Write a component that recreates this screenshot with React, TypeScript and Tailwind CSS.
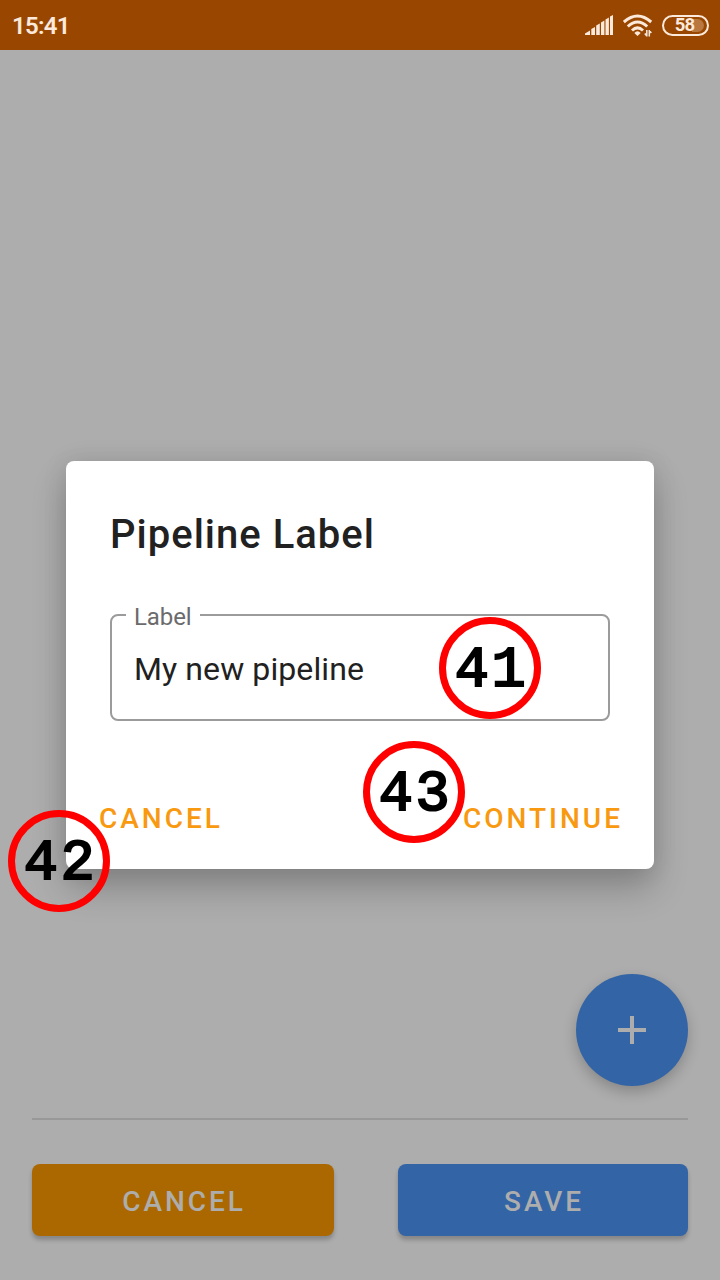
import React from "react";

function SignalIcon() {
  return (
    <svg width="28" height="22" viewBox="0 0 28 22" fill="#fbe9dc" className="block">
      <path d="M0 21V19.500L5 16.500V21Z" />
      <path d="M6.300 21V15L10 13V21Z" />
      <path d="M11.200 21V11.500L14.800 9.500V21Z" />
      <path d="M16 21V8.500L19.400 6.500V21Z" />
      <path d="M20.500 21V5.500L23.900 3.500V21Z" />
      <path d="M25 21V2.500L28 1V21Z" />
    </svg>
  );
}

function WifiIcon() {
  return (
    <svg width="30" height="24" viewBox="0 0 30 24" fill="none" stroke="#fbe9dc" className="block">
      <path d="M0.800 9Q14.500 -3 28.200 9" strokeWidth="3" />
      <path d="M4.800 13.500Q14.500 4.500 24.200 13.500" strokeWidth="3" />
      <path d="M9 17.500Q14.500 12.300 20 17.500" strokeWidth="3" />
      <path d="M11.300 20Q14.500 16.300 17.700 20L14.500 23Z" fill="#fbe9dc" stroke="none" />
      <path d="M23.800 17v6.500M21.800 20.500l2 2.500M26.300 23.500V17M26.300 17.500l2 2.500" strokeWidth="1.500" />
    </svg>
  );
}

function Marker({ n, place }: { n: string; place: string }) {
  return (
    <div
      className={`absolute ${place} z-20 flex size-[102px] items-center justify-center rounded-full border-[7.500px] border-[#ff0000] pl-[3px] pt-[7px] font-['Liberation_Mono',monospace] text-[57px] font-normal leading-none tracking-[2.500px] text-black [-webkit-text-stroke:2.200px_black] [stroke-linejoin:round]`}
    >
      {n}
    </div>
  );
}

export default function App() {
  return (
    <div className="relative flex h-[1280px] w-[720px] flex-col overflow-hidden bg-[#adadad] font-[Roboto,sans-serif]">
      <header className="flex h-[50px] shrink-0 items-center bg-[#994700] pl-3 pr-[11px] text-[#fbe9dc]">
        <span className="flex-1 pt-[2px] text-[24px] font-semibold leading-none tracking-[-0.700px]">15:41</span>
        <SignalIcon />
        <div className="ml-[10px]"><WifiIcon /></div>
        <div className="relative ml-[9px] flex h-[21px] w-[47px] items-center justify-center rounded-full border-2 border-[#fbe9dc] pr-[2px]">
          <div className="absolute right-[3px] top-[2px] h-[13px] w-[12px] rounded-r-full bg-[#b8783f]" />
          <span className="relative text-[18.500px] font-bold leading-none tracking-[-0.800px]">58</span>
        </div>
      </header>

      <main className="flex flex-1 flex-col justify-end px-8">
        <button className="mb-8 flex size-28 items-center justify-center self-end rounded-full bg-[#3364a6] shadow-[0_6px_14px_rgba(0,0,0,0.22)]">
          <svg width="28" height="28" viewBox="0 0 28 28" fill="#adadad">
            <path d="M12 0h4v12h12v4H16v12h-4V16H0v-4h12Z" />
          </svg>
        </button>
        <div className="h-[2px] bg-[#989898]" />
        <div className="mb-11 mt-11 flex h-[72px] gap-16 text-[28px] font-medium leading-none tracking-[2.900px] text-[#adadad]">
          <button className="w-[302px] rounded-lg bg-[#ac6800] pl-[2px] pt-1 shadow-[0_4px_4px_rgba(0,0,0,0.22)]">CANCEL</button>
          <button className="flex-1 rounded-lg bg-[#3364a6] pl-[2px] pt-1 shadow-[0_4px_4px_rgba(0,0,0,0.22)]">SAVE</button>
        </div>
      </main>

      <section className="absolute left-[66px] top-[461px] flex h-[408px] w-[588px] flex-col rounded-lg bg-white px-11 shadow-[0_20px_34px_rgba(0,0,0,0.22),0_0_24px_rgba(0,0,0,0.1)]">
        <h1 className="mt-[50px] text-[40px] font-medium leading-[48px] tracking-[1px] text-[#212121]">Pipeline Label</h1>
        <div className="relative mt-[55px] flex h-[107px] items-center rounded-lg border-2 border-[#9b9b9b] pl-[22px] pt-[2px] text-[32px] tracking-[0.100px] text-[#212121]">
          <span className="absolute left-[14px] top-[-15px] bg-white px-2 text-[24px] leading-[32px] tracking-[-0.100px] text-[#6b6b6b]">Label</span>
          My new pipeline
        </div>
        <div className="-mx-3 mt-[78px] flex justify-between text-[28px] font-medium leading-[40px] tracking-[3px] text-[#f8990f]">
          <button className="pl-[1px]">CANCEL</button>
          <button className="-mr-[1px]">CONTINUE</button>
        </div>
      </section>

      <Marker n="41" place="left-[439px] top-[617px]" />
      <Marker n="43" place="left-[363px] top-[741px]" />
      <Marker n="42" place="left-[8px] top-[810px]" />
    </div>
  );
}
